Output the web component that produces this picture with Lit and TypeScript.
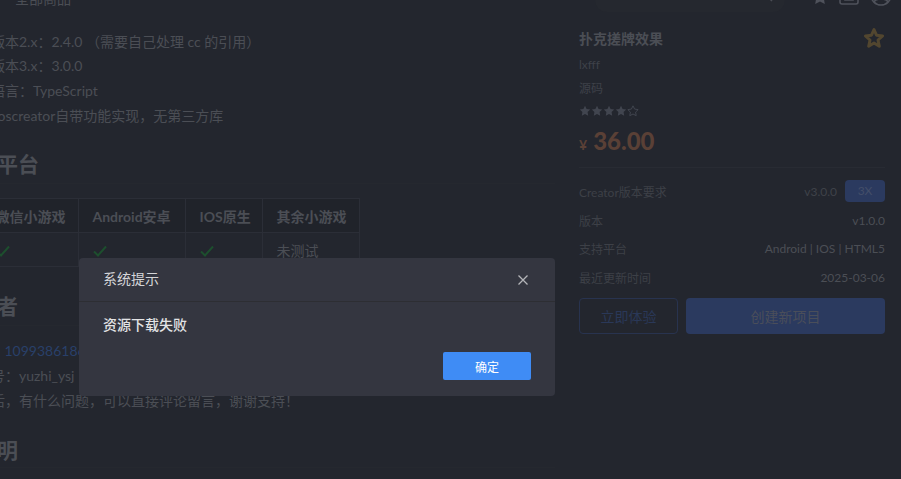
import { LitElement, html, css } from "lit";
import { customElement } from "lit/decorators.js";

const check = html`<svg class="check" viewBox="0 0 14 12"><path d="M1 6.5 L5 10.5 L13 1.5" fill="none" stroke="#1d4f2e" stroke-width="1.9"/></svg>`;
const starPath = "M6 .8 7.6 4.1 11.2 4.6 8.6 7.1 9.2 10.7 6 9 2.8 10.7 3.4 7.1 .8 4.6 4.4 4.1Z";
const star = (filled: boolean) =>
  html`<svg class="star" viewBox="0 0 12 12"><path d=${starPath} fill=${filled ? "#41454f" : "none"} stroke=${filled ? "none" : "#41454f"} stroke-width="1"/></svg>`;

@customElement("app-root")
export class AppRoot extends LitElement {
  static styles = css`
    :host {
      display: block; width: 901px; height: 479px; overflow: hidden; position: relative;
      background: #23262e; color: #4b4e55; font-size: 14px;
      font-family: Lato, "Noto Sans CJK SC", sans-serif;
    }
    .page { display: flex; height: 479px; overflow: hidden; }
    .main { width: 555px; flex: none; }
    .crumb { margin: -11px 0 0 15px; height: 20px; line-height: 20px; font-size: 14px; }
    .body { margin: 20.7px 0 0 -9px; }
    .body.flush { margin-top: 0; }
    .line { height: 24.7px; line-height: 24.7px; white-space: nowrap; }
    .two { margin-left: -28px; }
    .qq { margin-left: -23px; }
    h2 {
      margin: 21px 0 14px -24px; padding-bottom: 4px; line-height: 30px; height: 30px;
      font-size: 21px; font-weight: 700; white-space: nowrap; color: #4b4e55;
      border-bottom: 1px solid #25282f; box-sizing: content-box;
    }
    h2.after-table { margin-top: 24px; margin-bottom: 12.7px; }
    h2.last { margin-top: 22px; padding-bottom: 2px; }
    table { border-collapse: collapse; table-layout: fixed; width: 378px; margin-left: -19px; }
    th, td { box-sizing: border-box; border: 1px solid #2b2e37; padding: 0 13.5px; text-align: left; white-space: nowrap; }
    th { height: 34px; font-weight: 700; background: #20232a; }
    td { height: 34px; }
    .c1 { width: 97px; }
    .c2 { width: 107px; }
    .c3 { width: 77px; }
    .c4 { width: 97px; }
    .check { display: block; width: 14px; height: 12px; margin-top: 3px; }
    .link { color: #29406a; }
    .side { width: 306px; margin-left: 24px; flex: none; }
    .topbar { display: flex; align-items: flex-end; height: 24px; margin: -12px -10px 0 16px; }
    .search {
      width: 190px; height: 24px; box-sizing: border-box; padding: 0 12px 10px 15px;
      display: flex; align-items: flex-end; justify-content: space-between;
      background: #25282f; border-radius: 0 0 12px 12px; font-size: 12px; line-height: 14px; color: #3f4249;
    }
    .topicon { display: block; flex: none; }
    .i-star { width: 18px; height: 18px; margin: 0 0 6px 26px; }
    .i-box { width: 20px; height: 20px; margin: 0 0 7px 10px; }
    .i-user { width: 22px; height: 22px; margin: 0 0 6px 11px; }
    .title {
      display: flex; justify-content: space-between; align-items: center;
      height: 24px; margin-top: 14px; font-size: 14px; font-weight: 700;
    }
    .fav { display: block; width: 22px; height: 22px; }
    .sub { font-size: 12px; line-height: 23.5px; color: #3e4149; }
    .sub.first { margin-top: 3px; }
    .rating { display: flex; align-items: center; height: 20px; margin-top: 1px; }
    .star { display: block; width: 12px; height: 12px; }
    .price {
      display: flex; align-items: baseline; gap: 6px; height: 36px; line-height: 36px;
      color: #5a4036; font-weight: 900; font-size: 24px; margin-top: 2px;
    }
    .price small { font-size: 14px; font-weight: 700; }
    .divider { height: 1px; background: #282b33; margin: 8px 0 0; }
    .row { display: flex; justify-content: space-between; align-items: center; font-size: 12px; height: 28.5px; color: #3d4047; }
    .row.first { margin: 12px 0 3.75px; height: 22px; }
    .row b { font-weight: 400; color: #4b4e55; }
    .row .dim { color: #3f4249; }
    .right { display: flex; align-items: center; gap: 8px; }
    .tag { width: 40px; height: 22px; line-height: 22px; text-align: center; background: #2b3a5f; color: #434e69; border-radius: 4px; }
    .btns { display: flex; gap: 8px; margin-top: 6.75px; }
    .btn {
      height: 36px; box-sizing: border-box; border-radius: 4px; display: flex;
      align-items: center; justify-content: center; font-size: 14px;
    }
    .ghost { width: 99px; border: 1px solid #28334f; color: #2a3858; }
    .solid { flex: 1; background: #2b3a5f; color: #4a4e5a; }
    .modal {
      position: absolute; left: 79px; top: 258px; width: 476px; height: 138px;
      background: #343640; border-radius: 4px; display: flex; flex-direction: column;
    }
    .m-head {
      height: 44px; flex: none; box-sizing: border-box; padding: 0 27px 3px 24px; border-bottom: 1px solid #2d2e33;
      display: flex; align-items: center; justify-content: space-between; color: #d4d5d8;
    }
    .close { display: block; width: 10px; height: 10px; margin-top: 3px; }
    .m-body { padding: 13px 24px 0; height: 20px; line-height: 20px; font-weight: 500; color: #e2e3e5; }
    .m-foot { display: flex; justify-content: flex-end; padding: 17px 24px 0; }
    .ok {
      width: 88px; height: 28px; background: #3f8cf5; color: #fff; border-radius: 2px;
      display: flex; align-items: center; justify-content: center; font-size: 12px;
    }
  `;

  render() {
    return html`
      <div class="page">
        <div class="main">
          <div class="crumb">全部商品</div>
          <div class="body">
            <div class="line">版本2.x：2.4.0 （需要自己处理 cc 的引用）</div>
            <div class="line">版本3.x：3.0.0</div>
            <div class="line">语言：TypeScript</div>
            <div class="line">coscreator自带功能实现，无第三方库</div>
          </div>
          <h2>多平台</h2>
          <table>
            <tr><th class="c1">微信小游戏</th><th class="c2">Android安卓</th><th class="c3">IOS原生</th><th class="c4">其余小游戏</th></tr>
            <tr><td>${check}</td><td>${check}</td><td>${check}</td><td>未测试</td></tr>
          </table>
          <h2 class="after-table">作者</h2>
          <div class="body flush">
            <div class="line qq">QQ：<span class="link">1099386186</span></div>
            <div class="line two">微信号：yuzhi_ysj</div>
            <div class="line two">购买后，有什么问题，可以直接评论留言，谢谢支持！</div>
          </div>
          <h2 class="last">说明</h2>
        </div>
        <div class="side">
          <div class="topbar">
            <div class="search">
              <span>搜索商品、关键词、作者</span>
              <svg width="14" height="14" viewBox="0 0 14 14" fill="none" stroke="#4a4d55" stroke-width="1.5"><circle cx="6" cy="6" r="4.5"/><path d="M9.5 9.5 13 13"/></svg>
            </div>
            <svg class="topicon i-star" viewBox="0 0 12 12"><path d=${starPath} fill="#4f525b"/></svg>
            <svg class="topicon i-box" viewBox="0 0 20 20" fill="none" stroke="#4f525b" stroke-width="1.6"><rect x="1" y="1" width="18" height="18" rx="2"/><path d="M6 11h8v4H6z"/></svg>
            <svg class="topicon i-user" viewBox="0 0 22 22" fill="none" stroke="#4f525b" stroke-width="1.6"><circle cx="11" cy="11" r="10"/><circle cx="11" cy="8" r="4"/><path d="M4 18c2-4 12-4 14 0"/></svg>
          </div>
          <div class="title">
            <span>扑克搓牌效果</span>
            <svg class="fav" viewBox="0 0 22 22"><path d="M11 2.5 13.5 8.2 19.6 8.9 15 13 16.3 19.2 11 16 5.7 19.2 7 13 2.4 8.9 8.5 8.2Z" fill="none" stroke="#52462f" stroke-width="3" stroke-linejoin="round"/></svg>
          </div>
          <div class="sub first">lxfff</div>
          <div class="sub">源码</div>
          <div class="rating">${star(true)}${star(true)}${star(true)}${star(true)}${star(false)}</div>
          <div class="price"><small>¥</small><span>36.00</span></div>
          <div class="divider"></div>
          <div class="row first"><span>Creator版本要求</span><span class="right"><span class="dim">v3.0.0</span><span class="tag">3X</span></span></div>
          <div class="row"><span>版本</span><b>v1.0.0</b></div>
          <div class="row"><span>支持平台</span><b>Android | IOS | HTML5</b></div>
          <div class="row"><span>最近更新时间</span><b>2025-03-06</b></div>
          <div class="btns">
            <div class="btn ghost">立即体验</div>
            <div class="btn solid">创建新项目</div>
          </div>
        </div>
      </div>
      <div class="modal">
        <div class="m-head">
          <span>系统提示</span>
          <svg class="close" viewBox="0 0 10 10" fill="none" stroke="#b4b5b9" stroke-width="1.3"><path d="M.5.5l9 9M9.5.5l-9 9"/></svg>
        </div>
        <div class="m-body">资源下载失败</div>
        <div class="m-foot"><div class="ok">确定</div></div>
      </div>
    `;
  }
}
